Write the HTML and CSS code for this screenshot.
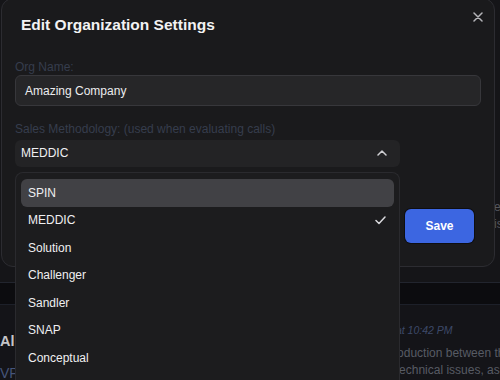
FILE: index.html
```html
<!DOCTYPE html>
<html lang="en">
<head>
    <meta charset="UTF-8">
    <meta name="viewport" content="width=device-width, initial-scale=1.0">
    <title>Edit Organization Settings</title>
    <link rel="stylesheet" href="styles.css">
</head>
<body>
    <!-- page behind the modal -->
    <div class="page">
        <div class="page-top">
            <p class="peek">ed<br>is</p>
        </div>
        <div class="tabs"></div>
        <div class="call">
            <div class="contact">
                <div class="contact-name">Al</div>
                <div class="contact-role">VP</div>
            </div>
            <div class="call-main">
                <div class="call-time">Mar 4, 2024 at 10:42 PM</div>
                <p class="call-text">Led the introduction between the two teams,<br>raising the technical issues, as well as pricing.</p>
            </div>
        </div>
    </div>

    <div class="modal">
        <div class="modal-header">
            <h2 class="modal-title">Edit Organization Settings</h2>
            <button class="modal-close" aria-label="Close">
                <svg width="10" height="10" viewBox="0 0 10 10"><path d="M1 1L9 9M9 1L1 9" stroke="#b4b4b8" stroke-width="1.5" stroke-linecap="round"/></svg>
            </button>
        </div>

        <div class="field">
            <label class="field-label">Org Name:</label>
            <div class="input">Amazing Company</div>
        </div>

        <div class="field field-gap">
            <label class="field-label">Sales Methodology: (used when evaluating calls)</label>
            <div class="select-wrap">
                <div class="select">
                    <span>MEDDIC</span>
                    <svg width="10" height="6" viewBox="0 0 10 6"><path d="M1 5L5 1L9 5" fill="none" stroke="#d0d0d4" stroke-width="1.5" stroke-linecap="round" stroke-linejoin="round"/></svg>
                </div>
                <ul class="menu">
                    <li class="menu-item active">SPIN</li>
                    <li class="menu-item">MEDDIC
                        <svg width="11" height="9" viewBox="0 0 11 9"><path d="M1 4.5L4 7.5L10 1" fill="none" stroke="#d8d8dc" stroke-width="1.5" stroke-linecap="round" stroke-linejoin="round"/></svg>
                    </li>
                    <li class="menu-item">Solution</li>
                    <li class="menu-item">Challenger</li>
                    <li class="menu-item">Sandler</li>
                    <li class="menu-item">SNAP</li>
                    <li class="menu-item">Conceptual</li>
                </ul>
            </div>
        </div>

        <div class="modal-footer">
            <button class="btn-save">Save</button>
        </div>
    </div>
</body>
</html>
```

FILE: styles.css
```css
body {
    margin: 0;
    height: 380px;
    overflow: hidden;
    background: #141417;
    font-family: "Liberation Sans", Arial, sans-serif;
    position: relative;
}

/* page behind the modal */
.page {
    width: 500px;
    height: 380px;
    overflow: hidden;
    display: flex;
    flex-direction: column;
}

.page-top {
    height: 282px;
    flex-shrink: 0;
    box-sizing: border-box;
    padding: 199px 0 0 494px;
    background: #151518;
}

.peek {
    margin: 0;
    font-size: 12px;
    line-height: 17px;
    color: #55575e;
}

.tabs {
    height: 21px;
    flex-shrink: 0;
    background: #0c0c0f;
    border-top: 1px solid #22252e;
    border-bottom: 1px solid #1d2029;
}

.call {
    display: flex;
    flex: 1;
    background: #141418;
    overflow: hidden;
}

.contact {
    width: 15px;
    padding-top: 27px;
    flex-shrink: 0;
}

.contact-name {
    font-size: 14.5px;
    line-height: 18px;
    font-weight: bold;
    color: #c4c4c8;
}

.contact-role {
    margin-top: 14px;
    font-size: 14px;
    line-height: 18px;
    color: #46557a;
}

.call-main {
    margin-left: 322px;
    padding-top: 18px;
    min-width: 0;
}

.call-time {
    font-size: 10.5px;
    line-height: 14px;
    font-style: italic;
    color: #3d4968;
    white-space: nowrap;
}

.call-text {
    margin: 8px 0 0;
    font-size: 12px;
    line-height: 16.6px;
    color: #575b64;
    white-space: nowrap;
}

/* modal */
.modal {
    position: absolute;
    top: -2px;
    left: 1px;
    width: 494px;
    box-sizing: border-box;
    background: #1a1a1c;
    border: 1px solid #2c2c31;
    border-radius: 12px;
    padding: 0 13px 23px;
}

.modal-header {
    padding: 16px 6px 0;
}

.modal-title {
    margin: 0;
    font-size: 15.5px;
    line-height: 20px;
    font-weight: bold;
    color: #f2f2f3;
}

.modal-close {
    position: absolute;
    top: 13px;
    right: 11px;
    width: 10px;
    height: 10px;
    padding: 0;
    border: 0;
    background: none;
    display: flex;
}

.field {
    margin-top: 24px;
}

.field-gap {
    margin-top: 14.5px;
}

.field-label {
    display: block;
    font-size: 12px;
    line-height: 16px;
    color: #363d4d;
}

.input {
    height: 31px;
    box-sizing: border-box;
    display: flex;
    align-items: center;
    padding: 0 9px;
    background: #262628;
    border: 1px solid #37373b;
    border-radius: 6px;
    font-size: 12px;
    color: #ececee;
}

.select-wrap {
    position: relative;
    width: 385px;
    margin-top: 3px;
}

.select {
    height: 27px;
    display: flex;
    align-items: center;
    justify-content: space-between;
    padding: 0 13px 0 6px;
    background: #232325;
    border-radius: 6px;
    font-size: 12px;
    color: #f0f0f2;
}

.menu {
    position: absolute;
    top: calc(100% + 5.5px);
    left: 0;
    right: 0;
    height: 220px;
    box-sizing: border-box;
    margin: 0;
    padding: 6px 5px;
    list-style: none;
    background: #1c1c1e;
    border: 1px solid #2a2a2e;
    border-bottom: 0;
    border-radius: 8px 8px 0 0;
    z-index: 2;
}

.menu-item {
    height: 27.5px;
    display: flex;
    align-items: center;
    justify-content: space-between;
    padding: 0 8px 0 7px;
    border-radius: 6px;
    font-size: 12px;
    color: #efeff1;
}

.menu-item.active {
    background: #414145;
}

.modal-footer {
    display: flex;
    justify-content: flex-end;
    margin-top: 42px;
    padding-right: 7px;
}

.btn-save {
    width: 69px;
    height: 34px;
    border: 0;
    border-radius: 6px;
    background: #3c66e1;
    box-shadow: 0 0 0 1px #0e0e11;
    color: #fff;
    font-family: inherit;
    font-size: 12px;
    font-weight: bold;
}
```
